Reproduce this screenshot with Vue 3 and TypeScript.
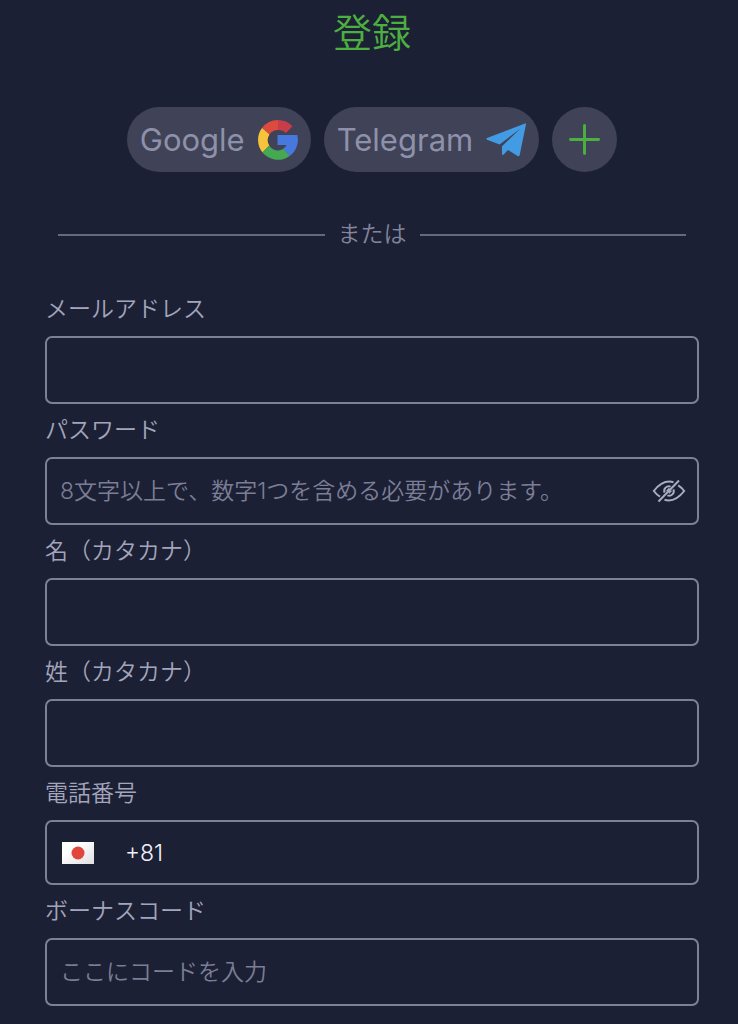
<script setup lang="ts">
import { ref } from 'vue'

const email = ref('')
const password = ref('')
const firstName = ref('')
const lastName = ref('')
const phone = ref('+81')
const bonusCode = ref('')
const passwordVisible = ref(false)
</script>

<template>
  <main class="page" lang="ja">
    <h1 class="title">登録</h1>

    <div class="socials">
      <button type="button" class="pill">
        <span>Google</span>
        <svg class="google" viewBox="0 0 40 40" aria-hidden="true">
          <path fill="#dc4b3e" d="M4 8A20 20 0 0 1 20 0V10A10 10 0 0 0 11.5 14.5Z" />
          <path fill="#c73d48" d="M20 0A20 20 0 0 1 34.5 6.3L28 13A10 10 0 0 0 20 10Z" />
          <path fill="#f7c23c" d="M4 8L11.5 14.5A10 10 0 0 0 11.3 25.5L4.5 32.5A20 20 0 0 1 4 8Z" />
          <path fill="#45a853" d="M4.5 32.5L11.3 25.5A10 10 0 0 0 25.5 28.8L32 35.8A20 20 0 0 1 4.5 32.5Z" />
          <path fill="#4678de" d="M19.5 15H39.3A20 20 0 0 1 32 35.8L25 29A9 9 0 0 0 28.5 25H19.5Z" />
        </svg>
      </button>
      <button type="button" class="pill">
        <span>Telegram</span>
        <svg class="telegram" viewBox="0 0 40 34" aria-hidden="true">
          <path
            fill="#429be3"
            d="M39 .4L1 15Q-.2 15.8 1 16.7L13.6 21.4L34.5 5.6L16 23.2V31.2Q16.3 32.8 17.6 31.6L22 27L31.6 33Q33.2 33.8 33.7 32L40 1.3Q40 .1 39 .4Z"
          />
        </svg>
      </button>
      <button type="button" class="pill round" aria-label="+">
        <svg class="plus" viewBox="0 0 32 32" aria-hidden="true">
          <path d="M16 1.5V30.5M1.5 16H30.5" stroke="#4caf3f" stroke-width="3" stroke-linecap="round" />
        </svg>
      </button>
    </div>

    <div class="divider"><span>または</span></div>

    <form @submit.prevent>
      <label for="email">メールアドレス</label>
      <div class="field">
        <input id="email" v-model="email" type="email" />
      </div>

      <label for="password">パスワード</label>
      <div class="field">
        <input
          id="password"
          v-model="password"
          :type="passwordVisible ? 'text' : 'password'"
          placeholder="8文字以上で、数字1つを含める必要があります。"
        />
        <button type="button" class="eye" aria-label="パスワード" @click="passwordVisible = !passwordVisible">
          <svg viewBox="0 0 34 24" fill="none" stroke="#a9acc2" stroke-width="2" aria-hidden="true">
            <path d="M21.5 3.2Q11 .2 1.8 12Q4.5 15.6 8 17.6" />
            <path d="M26.2 6.4Q29.5 8.4 32.2 12Q23 23.8 12.5 20.8" />
            <path d="M12.6 13.6A4.6 4.6 0 0 1 18.6 7.6" />
            <path d="M21.4 10.4A4.6 4.6 0 0 1 15.4 16.4" />
            <path d="M14.6 12.2L17.4 9.4M16.8 14.2L19.4 11.6" stroke-width="1.5" />
            <path d="M6.5 22.5L27 1.5" />
          </svg>
        </button>
      </div>

      <label for="first-name">名（カタカナ）</label>
      <div class="field">
        <input id="first-name" v-model="firstName" type="text" />
      </div>

      <label for="last-name">姓（カタカナ）</label>
      <div class="field">
        <input id="last-name" v-model="lastName" type="text" />
      </div>

      <label for="phone">電話番号</label>
      <div class="field phone">
        <button type="button" class="country" aria-label="+81">
          <svg viewBox="0 0 32 22" aria-hidden="true">
            <defs>
              <linearGradient id="flag-shade" x1="0" y1="0" x2="1" y2="1">
                <stop offset="0.3" stop-color="#ffffff" />
                <stop offset="1" stop-color="#dfdfe2" />
              </linearGradient>
            </defs>
            <rect width="32" height="22" fill="url(#flag-shade)" />
            <circle cx="16" cy="11" r="6.5" fill="#e2453b" />
          </svg>
        </button>
        <input id="phone" v-model="phone" type="tel" />
      </div>

      <label for="bonus">ボーナスコード</label>
      <div class="field">
        <input id="bonus" v-model="bonusCode" type="text" placeholder="ここにコードを入力" />
      </div>
    </form>
  </main>
</template>

<style>
body {
  margin: 0;
  background: #1c2035;
}
</style>

<style scoped>
.page {
  box-sizing: border-box;
  padding: 5px 39px 18px 45px;
  background: #1c2035;
  color: #a2a5bb;
  font-family: Inter, 'Noto Sans CJK JP', sans-serif;
  font-size: 23px;
  font-weight: 350;
}

.title {
  margin: 0;
  color: #4caf3f;
  font-size: 39px;
  font-weight: 350;
  line-height: 56px;
  text-align: center;
}

.socials {
  display: flex;
  justify-content: center;
  gap: 13px;
  margin-top: 46px;
}

button {
  border: 0;
  padding: 0;
  background: none;
  color: inherit;
  font: inherit;
  cursor: pointer;
}

.pill {
  display: flex;
  align-items: center;
  justify-content: space-between;
  gap: 13px;
  height: 65px;
  padding: 0 13px;
  border-radius: 33px;
  background: #404257;
  color: #8e91aa;
  font-size: 31px;
  font-weight: 400;
}

.round {
  justify-content: center;
  width: 65px;
  padding: 0;
}

.google {
  width: 40px;
  height: 40px;
}

.telegram {
  width: 40px;
  height: 34px;
}

.plus {
  width: 31px;
  height: 31px;
}

.divider {
  display: flex;
  align-items: center;
  gap: 13px;
  margin: 47px 13px 33px;
  color: #82859b;
  line-height: 31px;
}

.divider::before,
.divider::after {
  content: '';
  flex: 1;
  height: 2px;
  background: #646881;
}

label {
  display: block;
  line-height: 53px;
}

.field {
  display: flex;
  align-items: center;
  box-sizing: border-box;
  height: 68px;
  padding: 0 11px 0 13px;
  border: 2px solid #7d8099;
  border-radius: 7px;
}

.phone {
  height: 65px;
  padding-left: 15px;
}

input {
  flex: 1;
  min-width: 0;
  padding: 0;
  border: 0;
  outline: 0;
  background: none;
  color: #f1f2f8;
  font: inherit;
  line-height: 34px;
}

input::placeholder {
  color: #7b7e95;
  opacity: 1;
}

.eye svg {
  display: block;
  width: 34px;
  height: 24px;
}

.country {
  margin-right: 31px;
}

.country svg {
  display: block;
  width: 32px;
  height: 22px;
}
</style>
